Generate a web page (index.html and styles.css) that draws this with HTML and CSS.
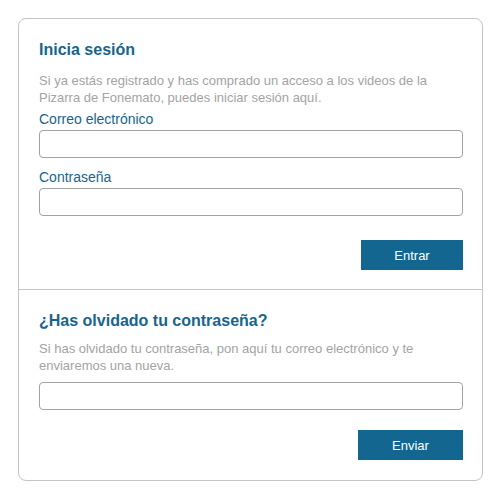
FILE: index.html
```html
<!DOCTYPE html>
<html lang="es">
<head>
<meta charset="utf-8">
<title>Inicia sesión</title>
<link rel="stylesheet" href="styles.css">
</head>
<body>
<div class="panel">
  <form class="section section-login">
    <h2 class="title">Inicia sesión</h2>
    <p class="desc">Si ya estás registrado y has comprado un acceso a los videos de la Pizarra de Fonemato, puedes iniciar sesión aquí.</p>
    <label class="label" for="email">Correo electrónico</label>
    <input class="field" id="email" type="text">
    <label class="label label-second" for="pass">Contraseña</label>
    <input class="field" id="pass" type="password">
    <div class="actions">
      <button class="btn btn-login" type="button">Entrar</button>
    </div>
  </form>
  <form class="section section-forgot">
    <h2 class="title">¿Has olvidado tu contraseña?</h2>
    <p class="desc desc-forgot">Si has olvidado tu contraseña, pon aquí tu correo electrónico y te enviaremos una nueva.</p>
    <input class="field" type="text">
    <div class="actions actions-forgot">
      <button class="btn btn-send" type="button">Enviar</button>
    </div>
  </form>
</div>
</body>
</html>
```

FILE: styles.css
```css
html, body {
  margin: 0;
  padding: 0;
  background: #ffffff;
}

body {
  padding: 18px 0 0 18px;
  font-family: "Liberation Sans", Arial, sans-serif;
}

.panel {
  width: 465px;
  box-sizing: border-box;
  border: 1px solid #c4c4c4;
  border-radius: 8px;
  background: #ffffff;
}

.section {
  display: flex;
  flex-direction: column;
  margin: 0;
  padding: 21px 19px 19px 20px;
}

.section-login {
  padding-bottom: 19px;
  border-bottom: 1px solid #c4c4c4;
}

.section-forgot {
  padding-top: 21px;
  padding-bottom: 20px;
}

.title {
  margin: 0;
  font-size: 16px;
  line-height: 20px;
  font-weight: bold;
  color: #16658d;
}

.desc {
  margin: 12px 0 0 0;
  font-size: 13px;
  line-height: 17px;
  color: #a3a3a3;
}

.desc-forgot {
  margin-top: 9px;
}

.label {
  margin-top: 5px;
  font-size: 14px;
  line-height: 16px;
  color: #16658d;
}

.label-second {
  margin-top: 11px;
}

.field {
  display: block;
  width: 424px;
  height: 28px;
  margin: 3px 0 0 0;
  box-sizing: border-box;
  border: 1px solid #a2a2a2;
  border-radius: 4px;
  background: #ffffff;
  padding: 0 6px;
  font-family: inherit;
  font-size: 13px;
  outline: none;
}

.section-forgot .field {
  margin-top: 8px;
}

.actions {
  display: flex;
  justify-content: flex-end;
  width: 424px;
  margin-top: 24px;
}

.actions-forgot {
  margin-top: 20px;
}

.btn {
  height: 30px;
  border: 0;
  border-radius: 0;
  background: #136690;
  color: #ffffff;
  font-family: inherit;
  font-size: 13px;
  padding: 0;
  cursor: pointer;
}

.btn-login {
  width: 102px;
}

.btn-send {
  width: 105px;
}
```
